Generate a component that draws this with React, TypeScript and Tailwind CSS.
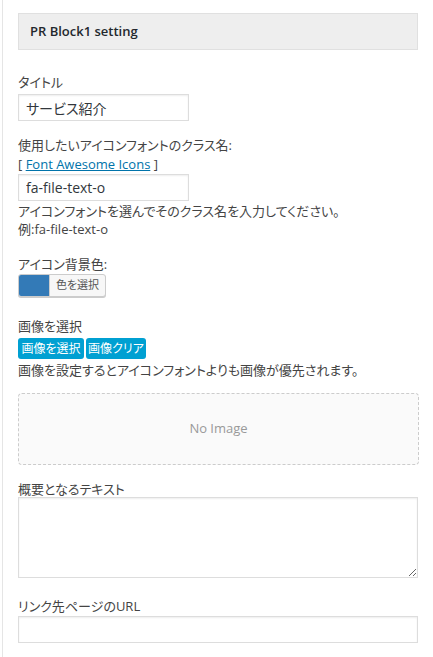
export default function App() {
  const font = { fontFamily: '"Open Sans", "Noto Sans CJK JP", sans-serif' };
  const inputCls =
    'block h-[27px] border border-[#ddd] bg-white px-[7px] text-[14px] text-[#32373c] shadow-[inset_0_1px_2px_rgba(0,0,0,0.07)] outline-none';
  const blueBtn =
    'h-[21px] whitespace-nowrap rounded-[3px] bg-[#00a0d2] px-[2px] text-[12px] leading-[21px] text-white';

  return (
    <div className="min-h-[657px] bg-white [font-feature-settings:'palt']" style={font}>
      <div className="ml-[2px] min-h-[657px] border-l border-[#e5e5e5] pl-[15px] text-[13px] text-[#444]">
        <div className="w-[400px] pt-[13px] pb-[20px]">
          {/* Header */}
          <div className="flex h-[37px] items-center border border-[#e0e0e0] bg-[#eee] pl-[11px] text-[13px] font-semibold text-[#23282d]">
            PR Block1 setting
          </div>

          {/* Title */}
          <p className="mt-[23px] leading-[18px]">タイトル</p>
          <input className={`${inputCls} mt-[3px] w-[171px]`} defaultValue="サービス紹介" />

          {/* Icon font */}
          <p className="mt-[15px] leading-[18px]">使用したいアイコンフォントのクラス名:</p>
          <p className="mt-[1px] leading-[18px]">
            [ <a href="#" className="text-[#0073aa] underline">Font Awesome Icons</a> ]
          </p>
          <input className={`${inputCls} mt-[1px] w-[171px]`} defaultValue="fa-file-text-o" />
          <p className="mt-[1px] leading-[18px]">アイコンフォントを選んでそのクラス名を入力してください。</p>
          <p className="leading-[18px]">例:fa-file-text-o</p>

          {/* Icon background color */}
          <p className="mt-[17px] leading-[18px]">アイコン背景色:</p>
          <button className="mt-[1px] flex h-[23px] w-[88px] overflow-hidden rounded-[3px] border border-[#ccc] bg-[#f7f7f7] shadow-[0_1px_0_#ccc]">
            <span className="h-full w-[30px] bg-[#337ab7]" />
            <span className="flex h-full flex-1 items-center justify-center border-l border-[#ccc] text-[11px] text-[#555]">
              色を選択
            </span>
          </button>

          {/* Image */}
          <p className="mt-[20px] leading-[18px]">画像を選択</p>
          <div className="mt-[3px] flex gap-[2px]">
            <button className={`${blueBtn} w-[66px]`}>画像を選択</button>
            <button className={`${blueBtn} w-[60px]`}>画像クリア</button>
          </div>
          <p className="mt-[2px] leading-[18px]">画像を設定するとアイコンフォントよりも画像が優先されます。</p>
          <div className="mt-[14px] flex h-[72px] w-[401px] items-center justify-center rounded-[4px] border border-dashed border-[#ccc] bg-[#fafafa] text-[13px] text-[#999]">
            No Image
          </div>

          {/* Summary text */}
          <p className="mt-[16px] leading-[16px]">概要となるテキスト</p>
          <textarea className="block h-[81px] w-[400px] resize border border-[#ddd] bg-white shadow-[inset_0_1px_2px_rgba(0,0,0,0.07)] outline-none" />

          {/* Link URL */}
          <p className="mt-[19px] leading-[18px]">リンク先ページのURL</p>
          <input className={`${inputCls} mt-[1px] w-[400px]`} defaultValue="" />
        </div>
      </div>
    </div>
  );
}
